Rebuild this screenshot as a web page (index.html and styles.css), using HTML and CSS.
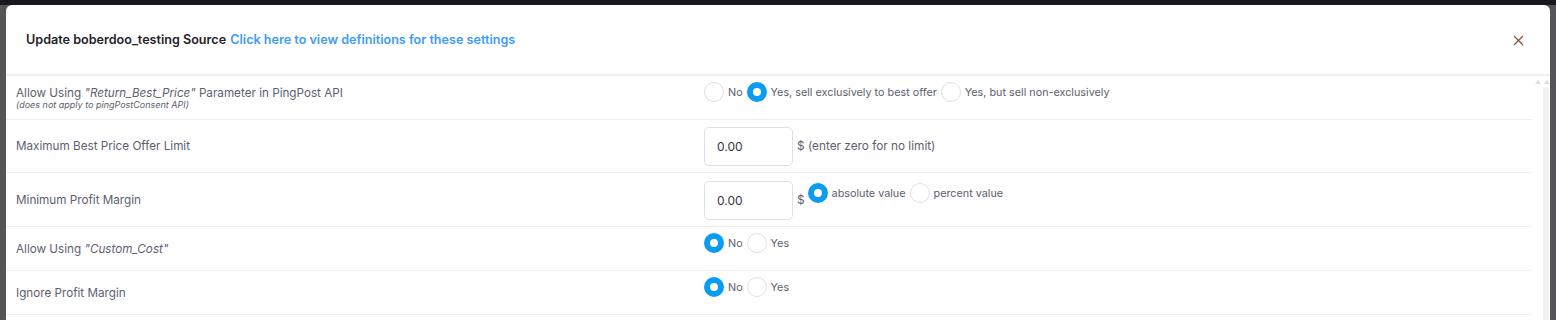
FILE: index.html
```html
<!DOCTYPE html>
<html lang="en">
<head>
  <meta charset="UTF-8">
  <title>Update boberdoo_testing Source</title>
  <link rel="stylesheet" href="styles.css">
</head>
<body>
  <div class="backdrop">
    <div class="modal">
      <div class="modal-header">
        <h5 class="modal-title">Update boberdoo_testing Source <a href="#">Click here to view definitions for these settings</a></h5>
        <button class="close" type="button">
          <svg width="11" height="11" viewBox="0 0 11 11"><path d="M1 1L10 10M10 1L1 10" stroke="#8a5040" stroke-width="1.2" fill="none"/></svg>
        </button>
      </div>

      <div class="modal-body">
        <div class="settings">
          <!-- return best price -->
          <div class="row">
            <div class="label">
              Allow Using <em>"Return_Best_Price"</em> Parameter in PingPost API
              <small>(does not apply to pingPostConsent API)</small>
            </div>
            <div class="value">
              <div class="radios">
                <span class="radio"></span><span class="opt">No</span>
                <span class="radio checked"></span><span class="opt">Yes, sell exclusively to best offer</span>
                <span class="radio"></span><span class="opt">Yes, but sell non-exclusively</span>
              </div>
            </div>
          </div>

          <div class="row">
            <div class="label">Maximum Best Price Offer Limit</div>
            <div class="value inputs">
              <input class="num" type="text" value="0.00">
              <span class="unit">$ (enter zero for no limit)</span>
            </div>
          </div>

          <div class="row">
            <div class="label">Minimum Profit Margin</div>
            <div class="value inputs margin">
              <input class="num" type="text" value="0.00">
              <span class="unit">$</span>
              <div class="radios inline">
                <span class="radio checked"></span><span class="opt">absolute value</span>
                <span class="radio"></span><span class="opt">percent value</span>
              </div>
            </div>
          </div>

          <div class="row">
            <div class="label">Allow Using <em>"Custom_Cost"</em></div>
            <div class="value">
              <div class="radios">
                <span class="radio checked"></span><span class="opt">No</span>
                <span class="radio"></span><span class="opt">Yes</span>
              </div>
            </div>
          </div>

          <div class="row">
            <div class="label">Ignore Profit Margin</div>
            <div class="value">
              <div class="radios">
                <span class="radio checked"></span><span class="opt">No</span>
                <span class="radio"></span><span class="opt">Yes</span>
              </div>
            </div>
          </div>
        </div>

        <div class="scroll">
          <div class="arrows"><span></span><span></span></div>
          <div class="track"></div>
        </div>
      </div>
    </div>
  </div>
</body>
</html>
```

FILE: styles.css
```css
html, body {
  margin: 0;
  height: 100%;
  overflow: hidden;
}

body {
  font-family: Inter, "Liberation Sans", sans-serif;
  background-color: #555558;
}

.backdrop {
  border-top: 5px solid #1a181d;
  padding: 0 6px;
  height: 100%;
}

.modal {
  background-color: #fff;
  border-radius: 6px 6px 0 0;
  height: 400px;
}

.modal-header {
  display: flex;
  align-items: center;
  justify-content: space-between;
  height: 69px;
  padding: 0 26px 0 20px;
  border-bottom: 2px solid #eef0f2;
}

.modal-title {
  margin: 0;
  font-size: 12.6px;
  font-weight: 600;
  color: #1f2229;
}

.modal-title a {
  color: #3d9cf7;
  text-decoration: none;
  margin-left: 1px;
}

.close {
  background: none;
  border: 0;
  padding: 0;
  width: 11px;
  height: 11px;
  margin-top: 1px;
}

.close svg {
  display: block;
}

.modal-body {
  display: flex;
}

.settings {
  flex: 1;
}

.row {
  display: grid;
  grid-template-columns: 688px 1fr;
  padding-left: 10px;
  border-bottom: 1px solid #eeeff1;
}

.label {
  align-self: center;
  font-size: 11.7px;
  line-height: 14px;
  color: #5d6070;
}

.label em {
  color: #5d6070;
}

.label small {
  display: block;
  font-size: 9px;
  line-height: 10px;
  font-style: italic;
}

.radios {
  display: flex;
  align-items: center;
  padding: 6px 0 17px;
}

.radios.inline {
  padding: 0;
  margin: 2px 0 0 3px;
}

.radio {
  box-sizing: border-box;
  width: 20px;
  height: 20px;
  border: 1px solid #dcdfe6;
  border-radius: 50%;
  background-color: #fff;
}

.radio.checked {
  border: 6px solid #0a9bf2;
}

.opt {
  font-size: 10.8px;
  color: #5d6070;
  margin: 0 4px 0 4px;
}

.inputs {
  display: flex;
  align-items: flex-start;
  padding: 7px 0 6px;
}

.inputs.margin {
  padding: 8px 0 6px;
}

.num {
  box-sizing: border-box;
  width: 89px;
  height: 39px;
  padding: 0 12px;
  border: 1px solid #dfe1e8;
  border-radius: 5px;
  font-family: Inter, "Liberation Sans", sans-serif;
  font-size: 12px;
  color: #33363f;
}

.unit {
  font-size: 11.8px;
  line-height: 38px;
  color: #5d6070;
  margin-left: 4px;
}

.scroll {
  width: 18px;
}

.arrows {
  display: flex;
  gap: 3px;
  padding: 4px 0 0 3px;
}

.arrows span {
  width: 0;
  height: 0;
  border-left: 3px solid transparent;
  border-right: 3px solid transparent;
  border-bottom: 4px solid #dcdde0;
}

.track {
  width: 6px;
  height: 240px;
  margin: 3px 0 0 11px;
  background-color: #f0f0f3;
  border-radius: 3px;
}
```
